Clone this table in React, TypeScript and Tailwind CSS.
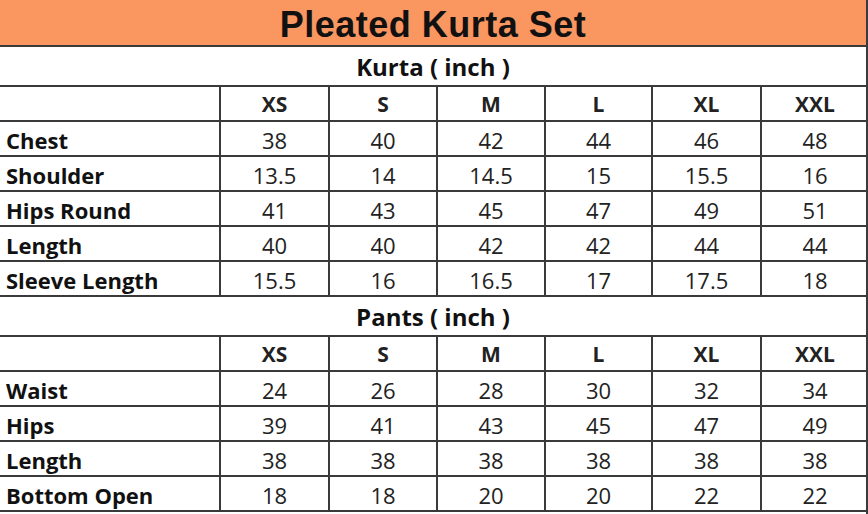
import React from "react";

const sizes = ["XS", "S", "M", "L", "XL", "XXL"];

const kurta: [string, string[]][] = [
  ["Chest", ["38", "40", "42", "44", "46", "48"]],
  ["Shoulder", ["13.5", "14", "14.5", "15", "15.5", "16"]],
  ["Hips Round", ["41", "43", "45", "47", "49", "51"]],
  ["Length", ["40", "40", "42", "42", "44", "44"]],
  ["Sleeve Length", ["15.5", "16", "16.5", "17", "17.5", "18"]],
];

const pants: [string, string[]][] = [
  ["Waist", ["24", "26", "28", "30", "32", "34"]],
  ["Hips", ["39", "41", "43", "45", "47", "49"]],
  ["Length", ["38", "38", "38", "38", "38", "38"]],
  ["Bottom Open", ["18", "18", "20", "20", "22", "22"]],
];

function Row({ label, cells, bold }: { label: string; cells: string[]; bold?: boolean }) {
  return (
    <div className="grid grid-cols-[219px_109px_108px_108px_107px_109px_108px] h-[35px] border-b-2 border-[#3a3a3a]">
      <div className="flex items-center pl-[6px] pt-[2px] font-bold text-[22px] text-[#111]">{label}</div>
      {cells.map((c, i) => (
        <div
          key={i}
          className={`flex items-center justify-center pt-[2px] border-l-2 border-[#3a3a3a] text-[#222] ${bold ? "font-bold text-[21px]" : "text-[22px]"}`}
        >
          {c}
        </div>
      ))}
    </div>
  );
}

function Section({ title, rows }: { title: string; rows: [string, string[]][] }) {
  return (
    <>
      <div className="h-[40px] flex items-center justify-center border-b-2 border-[#3a3a3a] font-bold text-[24px] text-[#111] pt-[1px]">
        {title}
      </div>
      <Row label="" cells={sizes} bold />
      {rows.map(([l, c]) => (
        <Row key={l + c.join()} label={l} cells={c} />
      ))}
    </>
  );
}

export default function App() {
  return (
    <div
      className="w-[868px] h-[514px] bg-white overflow-hidden border-r-2 border-[#3a3a3a]"
      style={{ fontFamily: "'Open Sans', Lato, sans-serif" }}
    >
      <div className="h-[47px] bg-[#FA9660] border-b-2 border-[#3a3a3a] flex items-center justify-center pt-[5px]">
        <span
          className="font-bold text-[36px] tracking-[0.5px] text-[#111]"
          style={{ fontFamily: "'Liberation Sans', Arial, sans-serif" }}
        >
          Pleated Kurta Set
        </span>
      </div>
      <Section title="Kurta ( inch )" rows={kurta} />
      <Section title="Pants ( inch )" rows={pants} />
    </div>
  );
}
